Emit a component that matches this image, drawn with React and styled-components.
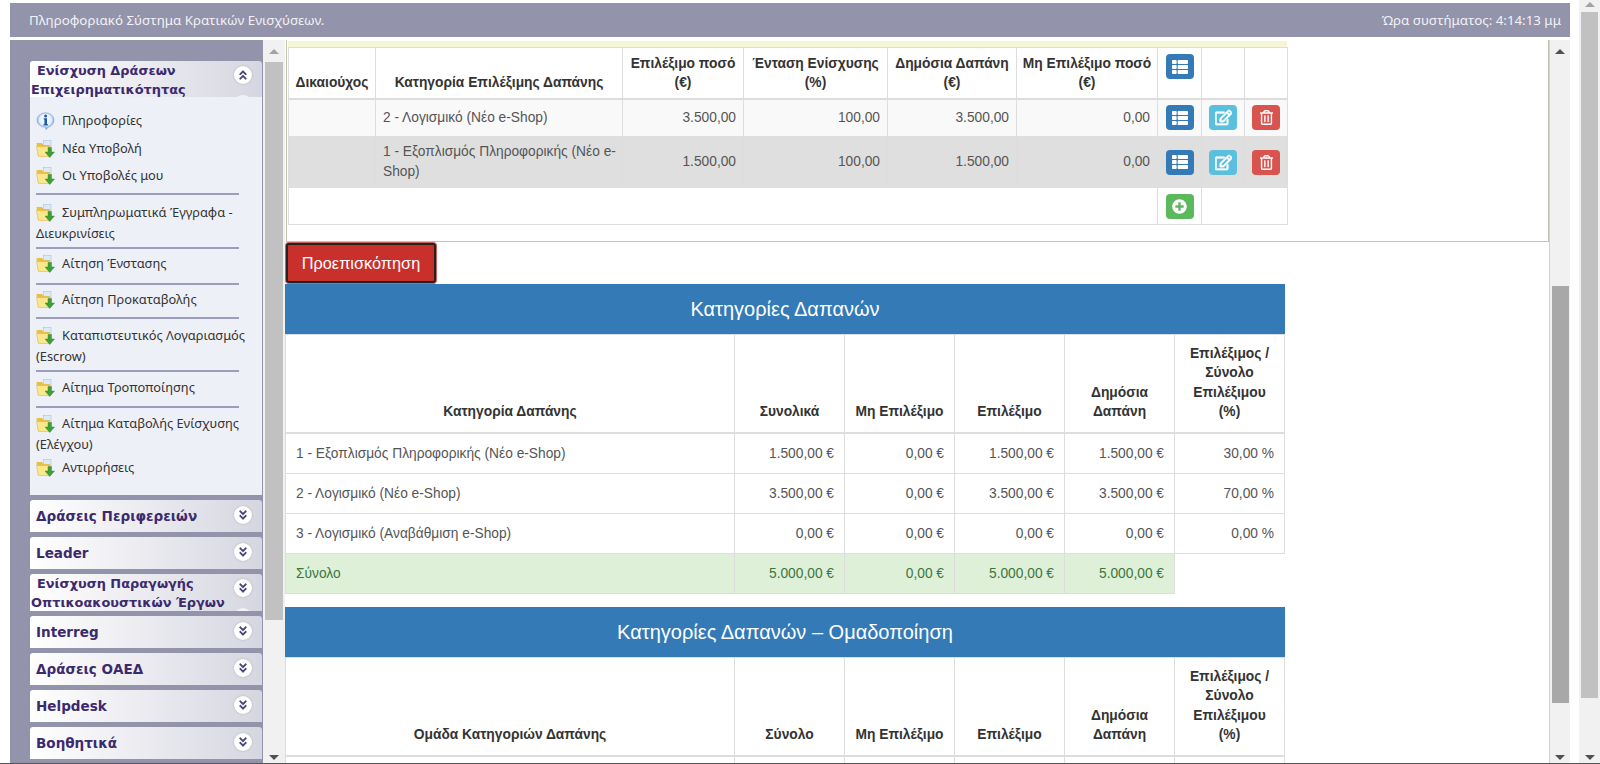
import React from 'react';
import styled, { createGlobalStyle } from 'styled-components';
import { FaThList, FaRegEdit, FaRegTrashAlt, FaPlusCircle, FaAngleDoubleUp, FaAngleDoubleDown } from 'react-icons/fa';

const Global = createGlobalStyle`
  html, body { margin: 0; padding: 0; height: 764px; overflow: hidden; background: #fff; }
  * { box-sizing: border-box; }
`;

const Page = styled.div`
  display: flex; height: 764px; overflow: hidden; padding-left: 10px; background: #fff;
  border-bottom: 1px solid #555;
  font-family: "Liberation Sans", Arial, sans-serif; font-size: 14px; color: #555;
`;
const Frame = styled.div`
  width: 1560px; padding-top: 3px; display: flex; flex-direction: column; height: 763px;
`;
const TopBar = styled.header`
  height: 34px; flex: none; background: #9393ab; color: #f2f2f6; display: flex; align-items: center;
  justify-content: space-between; padding: 0 9px 0 19px;
  font-family: "Noto Sans", Tahoma, sans-serif; font-size: 13.3px;
`;
const Columns = styled.div`
  flex: 1; min-height: 0; display: flex; margin-top: 3px;
`;
const Sidebar = styled.nav`
  width: 253px; flex: none; background: #9393ab; padding: 21px 1px 0 20px; overflow: hidden;
  font-family: "Noto Sans", Tahoma, sans-serif;
`;
const PanelHead = styled.div`
  position: relative; height: ${p => p.$h}px; overflow: hidden; margin-bottom: ${p => p.$mb}px;
  background: linear-gradient(90deg, #fff 0%, #d6d6e1 100%);
  border-radius: 3px 3px 0 0;
  color: #3c2a6e; font-family: "DejaVu Sans", Verdana, sans-serif; font-weight: bold;
  ${p => p.$two
    ? 'font-size: 12.9px; line-height: 18.5px; text-indent: 6px; padding: 1px 26px 0 1px;'
    : `font-size: 13.55px; line-height: ${p.$h}px; padding-left: 6px;`}
`;
const Toggle = styled.span`
  position: absolute; right: 10px; top: ${p => p.$top}px; width: 18px; height: 18px; border-radius: 50%;
  background: #fff; color: #46467a; display: flex; align-items: center; justify-content: center;
  text-indent: 0; box-shadow: 0 0 2px #aaa;
`;
const TogglePeek = styled.span`
  position: absolute; right: 10px; top: 34px; width: 18px; height: 18px; border-radius: 50%;
  background: #f2f2f6;
`;
const PanelBody = styled.div`
  height: 398px; background: #eef0f7; padding: 0 8px 0 6px; margin-bottom: 5px;
  font-size: 12.8px; color: #333; overflow: hidden;
`;
const Group = styled.div`
  padding: ${p => p.$top}px 0 ${p => p.$bottom}px;
`;
const Divider = styled.div`
  width: 203px; height: 2px; background: #9c9cbc;
`;
const Item = styled.div`
  line-height: 21px; margin-bottom: ${p => p.$gap || 0}px;
  svg { vertical-align: -5px; margin-right: 7px; }
`;
const ScrollTrack = styled.div`
  width: ${p => p.$w}px; flex: none; margin-left: ${p => p.$ml || 0}px; background: #f1f1f1;
  display: flex; flex-direction: column; align-items: center;
  ${p => p.$line && 'border-left: 1px solid #d4d4c4;'}
`;
const ArrowUp = styled.span`
  width: 0; height: 0; flex: none; margin-top: ${p => p.$mt}px;
  border-left: 5px solid transparent; border-right: 5px solid transparent;
  border-bottom: 5px solid ${p => p.$c};
`;
const ArrowDown = styled.span`
  width: 0; height: 0; flex: none; margin-bottom: 3px;
  border-left: 5px solid transparent; border-right: 5px solid transparent;
  border-top: 5px solid #505050;
`;
const Thumb = styled.span`
  flex: none; width: ${p => p.$w}px; height: ${p => p.$h}px; margin-top: ${p => p.$mt}px; margin-bottom: auto;
  background: ${p => p.$c};
`;
const Main = styled.main`
  flex: 1; min-width: 0; overflow: hidden;
`;
const Box = styled.section`
  margin-left: 1px; border-left: 1px solid #c4c4b0; border-right: 1px solid #c4c4b0; border-bottom: 1px solid #c4c4b0;
  padding: 1px 0 16px 1px; height: 202px;
`;
const Stripe = styled.div`
  width: 999px; height: 6px; background: #f6f6d6;
`;
const Table = styled.table`
  width: 999px; table-layout: fixed; border-collapse: collapse; background: #fff;
`;
const Th = styled.th`
  border: 1px solid #ddd; border-bottom-width: 2px; padding: ${p => p.$pad}; line-height: 19.3px; font-weight: bold;
  color: #333; text-align: center; vertical-align: ${p => p.$va || 'bottom'}; font-size: 13.8px;
`;
const Td = styled.td`
  border: 1px solid #ddd; padding: ${p => p.$pad}; line-height: 20px; color: #555;
  text-align: ${p => p.$align || 'left'}; vertical-align: middle; font-size: 13.75px;
  ${p => p.$ok && 'background: #dff0d8; color: #3c763d;'}
`;
const Row = styled.tr`
  height: ${p => p.$h}px; background: ${p => p.$bg || 'transparent'};
`;
const IconBtn = styled.span`
  display: flex; align-items: center; justify-content: center; width: 28px; height: 25px; border-radius: 4px; margin: 0 auto;
  background: ${p => p.$bg}; color: #fff; font-size: 14px;
`;
const Preview = styled.button`
  display: block; width: 150px; height: 40px; padding: 0; margin: 1px; font: 16.3px "Liberation Sans", Arial, sans-serif;
  color: #fff; background: #c9302c; border: 2px solid #222; border-radius: 3px;
  box-shadow: 0 0 0 1px #c86360;
`;
const Band = styled.h2`
  margin: ${p => p.$mt}px 0 0; width: 1000px; height: 50px; background: #337ab7; color: #fff; text-align: center;
  font-weight: normal; font-size: 20px; line-height: 50px;
`;

const FolderIcon = () => (
  <svg width="19" height="18" viewBox="0 0 19 18">
    <rect x="7.5" y="0.5" width="7.5" height="8" fill="#dce9f6" stroke="#a9c3dd" strokeWidth=".6" />
    <path d="M.5 3h5.5l1.5 2h6.5v11H2z" fill="#ecbd45" />
    <path d="M.5 6.5h13.5l1 10H2.5z" fill="#fbe88c" stroke="#deb13d" strokeWidth=".5" />
    <path d="M12 7.5h3.5V12H18.5l-4.8 5.5L9 12h3z" fill="#3f9f37" stroke="#2f7f2a" strokeWidth=".4" />
  </svg>
);
const InfoIcon = () => (
  <svg width="19" height="18" viewBox="0 0 19 18">
    <defs>
      <radialGradient id="inf" cx=".5" cy=".42" r=".58">
        <stop offset="0" stopColor="#fff" />
        <stop offset=".6" stopColor="#e4effa" />
        <stop offset="1" stopColor="#5f98d8" />
      </radialGradient>
    </defs>
    <path d="M9.5 .8a8.5 7.4 0 0 1 3 14.3L10 17.6l-.5-2.4A8.5 7.2 0 0 1 9.5 .8z" fill="url(#inf)" stroke="#6f9bd0" strokeWidth=".6" />
    <circle cx="9.6" cy="3.9" r="1.5" fill="#1f5cb5" />
    <path d="M7.6 6.2h3.4v6h1v1.2H7.4v-1.2h1V7.4h-.8z" fill="#1f5cb5" />
  </svg>
);

const Up = () => <FaAngleDoubleUp size={12} />;
const Down = () => <FaAngleDoubleDown size={12} />;

const Head = ({ text, two, h = 32, mb = 5, open }) => (
  <PanelHead $two={two} $h={h} $mb={mb}>
    {text}
    <Toggle $top={two ? 5 : 6}>{open ? <Up /> : <Down />}</Toggle>
    {two && <TogglePeek />}
  </PanelHead>
);

const groups = [
  { top: 12.5, bottom: 7, items: [['i', 'Πληροφορίες', 7.5], ['f', 'Νέα Υποβολή', 6], ['f', 'Οι Υποβολές μου']] },
  { top: 6.5, bottom: 3, items: [['f', 'Συμπληρωματικά Έγγραφα - Διευκρινίσεις']] },
  { top: 4.5, bottom: 8.5, items: [['f', 'Αίτηση Ένστασης']] },
  { top: 4.5, bottom: 6.5, items: [['f', 'Αίτηση Προκαταβολής']] },
  { top: 6.5, bottom: 2.5, items: [['f', 'Καταπιστευτικός Λογαριασμός (Escrow)']] },
  { top: 5.5, bottom: 7.5, items: [['f', 'Αίτημα Τροποποίησης']] },
  { top: 5.5, bottom: 0, last: true, items: [['f', 'Αίτημα Καταβολής Ενίσχυσης (Ελέγχου)', 2], ['f', 'Αντιρρήσεις']] },
];

const cols1 = [87, 247, 121, 144, 129, 141, 44, 43, 43];
const cols2 = [449, 110, 110, 110, 110, 110];

const ListBtn = () => <IconBtn $bg="#337ab7"><FaThList size={16} /></IconBtn>;
const EditBtn = () => <IconBtn $bg="#5bc0de"><FaRegEdit size={17} stroke="currentColor" strokeWidth={22} /></IconBtn>;
const DelBtn = () => <IconBtn $bg="#d9534f"><FaRegTrashAlt size={15} /></IconBtn>;
const AddBtn = () => <IconBtn $bg="#5cb85c"><FaPlusCircle size={15} /></IconBtn>;

const expenseRows = [
  ['2 - Λογισμικό (Νέο e-Shop)', '3.500,00', '100,00', '3.500,00', '0,00', 38, '#f9f9f9'],
  ['1 - Εξοπλισμός Πληροφορικής (Νέο e-Shop)', '1.500,00', '100,00', '1.500,00', '0,00', 51, '#dfdfdf'],
];

const catRows = [
  ['1 - Εξοπλισμός Πληροφορικής (Νέο e-Shop)', '1.500,00 €', '0,00 €', '1.500,00 €', '1.500,00 €', '30,00 %'],
  ['2 - Λογισμικό (Νέο e-Shop)', '3.500,00 €', '0,00 €', '3.500,00 €', '3.500,00 €', '70,00 %'],
  ['3 - Λογισμικό (Αναβάθμιση e-Shop)', '0,00 €', '0,00 €', '0,00 €', '0,00 €', '0,00 %'],
];

const Colgroup = ({ widths }) => (
  <colgroup>{widths.map((w, i) => <col key={i} style={{ width: w }} />)}</colgroup>
);

const headPad = '9px 8px 11px';
const SummaryHead = ({ first, second }) => (
  <thead>
    <tr>
      <Th $pad={headPad}>{first}</Th>
      <Th $pad={headPad}>{second}</Th>
      <Th $pad={headPad}>Μη Επιλέξιμο</Th>
      <Th $pad={headPad}>Επιλέξιμο</Th>
      <Th $pad={headPad}>Δημόσια Δαπάνη</Th>
      <Th $pad={headPad}>Επιλέξιμος / Σύνολο Επιλέξιμου (%)</Th>
    </tr>
  </thead>
);

const topPad = '6px 5px 5px';
const amountPad = '5px 7px';
const cellPad = '5px';
const catPad = '9.5px 10px';

export default function App() {
  return (
    <Page>
      <Global />
      <Frame>
        <TopBar>
          <span>Πληροφοριακό Σύστημα Κρατικών Ενισχύσεων.</span>
          <span>Ώρα συστήματος: 4:14:13 μμ</span>
        </TopBar>
        <Columns>
          <Sidebar>
            <Head text="Ενίσχυση Δράσεων Επιχειρηματικότητας" two h={36} mb={0} open />
            <PanelBody>
              {groups.map((g, i) => (
                <React.Fragment key={i}>
                  <Group $top={g.top} $bottom={g.bottom}>
                    {g.items.map(([ic, label, gap]) => (
                      <Item key={label} $gap={gap}>
                        {ic === 'i' ? <InfoIcon /> : <FolderIcon />}{label}
                      </Item>
                    ))}
                  </Group>
                  {!g.last && <Divider />}
                </React.Fragment>
              ))}
            </PanelBody>
            <Head text="Δράσεις Περιφερειών" />
            <Head text="Leader" />
            <Head text="Ενίσχυση Παραγωγής Οπτικοακουστικών Έργων" two h={37} />
            <Head text="Interreg" />
            <Head text="Δράσεις ΟΑΕΔ" />
            <Head text="Helpdesk" />
            <Head text="Βοηθητικά" />
          </Sidebar>
          <ScrollTrack $w={22}>
            <ArrowUp $mt={9} $c="#a3a3a3" />
            <Thumb $w={18} $h={558} $mt={8} $c="#c1c1c1" />
            <ArrowDown />
          </ScrollTrack>
          <Main>
            <Box>
              <Stripe />
              <Table>
                <Colgroup widths={cols1} />
                <thead>
                  <tr>
                    <Th $pad={topPad}>Δικαιούχος</Th>
                    <Th $pad={topPad}>Κατηγορία Επιλέξιμης Δαπάνης</Th>
                    <Th $pad={topPad}>Επιλέξιμο ποσό (€)</Th>
                    <Th $pad={topPad}>Ένταση Ενίσχυσης (%)</Th>
                    <Th $pad={topPad}>Δημόσια Δαπάνη (€)</Th>
                    <Th $pad={topPad}>Μη Επιλέξιμο ποσό (€)</Th>
                    <Th $pad={topPad} $va="top"><ListBtn /></Th>
                    <Th $pad={topPad} />
                    <Th $pad={topPad} />
                  </tr>
                </thead>
                <tbody>
                  {expenseRows.map(r => (
                    <Row key={r[0]} $h={r[5]} $bg={r[6]}>
                      <Td $pad={amountPad} />
                      <Td $pad="5px 2px 5px 7px">{r[0]}</Td>
                      {r.slice(1, 5).map((v, i) => <Td key={i} $pad={amountPad} $align="right">{v}</Td>)}
                      <Td $pad={cellPad}><ListBtn /></Td>
                      <Td $pad={cellPad}><EditBtn /></Td>
                      <Td $pad={cellPad}><DelBtn /></Td>
                    </Row>
                  ))}
                  <Row $h={37}>
                    <Td $pad={amountPad} colSpan={6} />
                    <Td $pad={cellPad}><AddBtn /></Td>
                    <Td $pad={cellPad} colSpan={2} />
                  </Row>
                </tbody>
              </Table>
            </Box>
            <Preview>Προεπισκόπηση</Preview>
            <Band $mt={0}>Κατηγορίες Δαπανών</Band>
            <Table>
              <Colgroup widths={cols2} />
              <SummaryHead first="Κατηγορία Δαπάνης" second="Συνολικά" />
              <tbody>
                {catRows.map(r => (
                  <Row key={r[0]}>
                    {r.map((v, i) => <Td key={i} $pad={catPad} $align={i ? 'right' : 'left'}>{v}</Td>)}
                  </Row>
                ))}
                <Row>
                  {['Σύνολο', '5.000,00 €', '0,00 €', '5.000,00 €', '5.000,00 €'].map((v, i) => (
                    <Td key={i} $ok $pad={catPad} $align={i ? 'right' : 'left'}>{v}</Td>
                  ))}
                </Row>
              </tbody>
            </Table>
            <Band $mt={13}>Κατηγορίες Δαπανών – Ομαδοποίηση</Band>
            <Table>
              <Colgroup widths={cols2} />
              <SummaryHead first="Ομάδα Κατηγοριών Δαπάνης" second="Σύνολο" />
              <tbody>
                <Row>
                  {cols2.map((_, i) => <Td key={i} $pad={catPad}>&nbsp;</Td>)}
                </Row>
              </tbody>
            </Table>
          </Main>
          <ScrollTrack $w={21} $line>
            <ArrowUp $mt={9} $c="#505050" />
            <Thumb $w={17} $h={417} $mt={232} $c="#a8a8a8" />
            <ArrowDown />
          </ScrollTrack>
        </Columns>
      </Frame>
      <ScrollTrack $w={21} $ml={9}>
        <ArrowUp $mt={2} $c="#a3a3a3" />
        <Thumb $w={17} $h={686} $mt={5} $c="#c1c1c1" />
        <ArrowDown />
      </ScrollTrack>
    </Page>
  );
}
